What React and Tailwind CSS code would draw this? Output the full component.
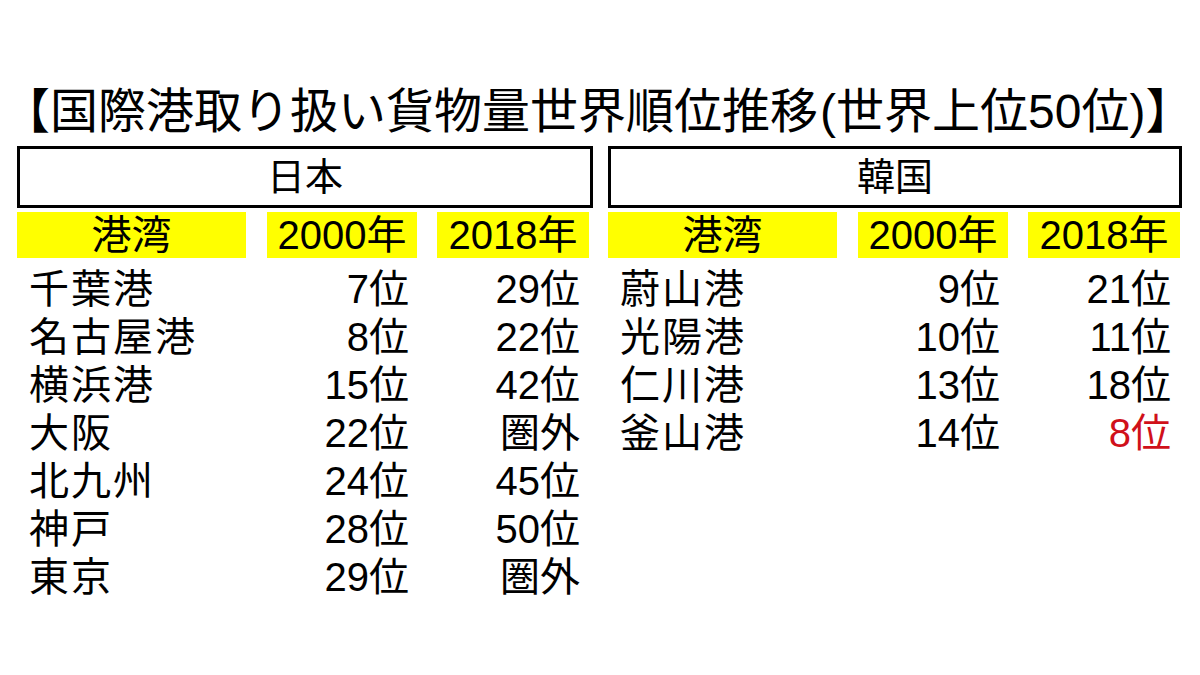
import React from 'react';

const japan = [
  ['千葉港', '7位', '29位'],
  ['名古屋港', '8位', '22位'],
  ['横浜港', '15位', '42位'],
  ['大阪', '22位', '圏外'],
  ['北九州', '24位', '45位'],
  ['神戸', '28位', '50位'],
  ['東京', '29位', '圏外'],
];

const korea = [
  ['蔚山港', '9位', '21位'],
  ['光陽港', '10位', '11位'],
  ['仁川港', '13位', '18位'],
  ['釜山港', '14位', '8位', true],
];

const font = { fontFamily: '"Liberation Sans", "Noto Sans CJK JP", sans-serif' };

const Table = ({ title, rows, width }) => (
  <div className={width}>
    {/* country box */}
    <div className="h-[62px] border-[3px] border-black flex items-center justify-center text-[38px] leading-none">
      {title}
    </div>

    {/* yellow header */}
    <div className="mt-[4px] flex h-[46px] text-[40px] leading-none">
      <div className="w-[229px] bg-[#ffff00] flex items-center justify-center">港湾</div>
      <div className="ml-[21px] w-[150px] bg-[#ffff00] flex items-center justify-center">2000年</div>
      <div className="ml-[20px] w-[152px] bg-[#ffff00] flex items-center justify-center">2018年</div>
    </div>

    {/* rows */}
    <div className="mt-[7px] text-[40px] leading-none">
      {rows.map(([name, a, b, red]) => (
        <div key={name} className="flex h-[48px] items-center">
          <div className="w-[229px] pl-[12px] tracking-[2px]">{name}</div>
          <div className="ml-[21px] w-[150px] pr-[8px] text-right">{a}</div>
          <div className={`ml-[20px] w-[152px] pr-[9px] text-right ${red ? 'text-[#d0101a]' : ''}`}>{b}</div>
        </div>
      ))}
    </div>
  </div>
);

export default function App() {
  return (
    <div className="w-[1200px] h-[675px] bg-white text-black overflow-hidden" style={font}>
      <div className="pt-[88px] pl-[2px] text-[48px] leading-[48px] whitespace-nowrap">
        【国際港取り扱い貨物量世界順位推移<span className="ml-[2px]">(</span>世界上位50位)】
      </div>
      <div className="mt-[10px] pl-[17px] flex gap-[15px]">
        <Table title="日本" rows={japan} width="w-[576px]" />
        <Table title="韓国" rows={korea} width="w-[574px]" />
      </div>
    </div>
  );
}
